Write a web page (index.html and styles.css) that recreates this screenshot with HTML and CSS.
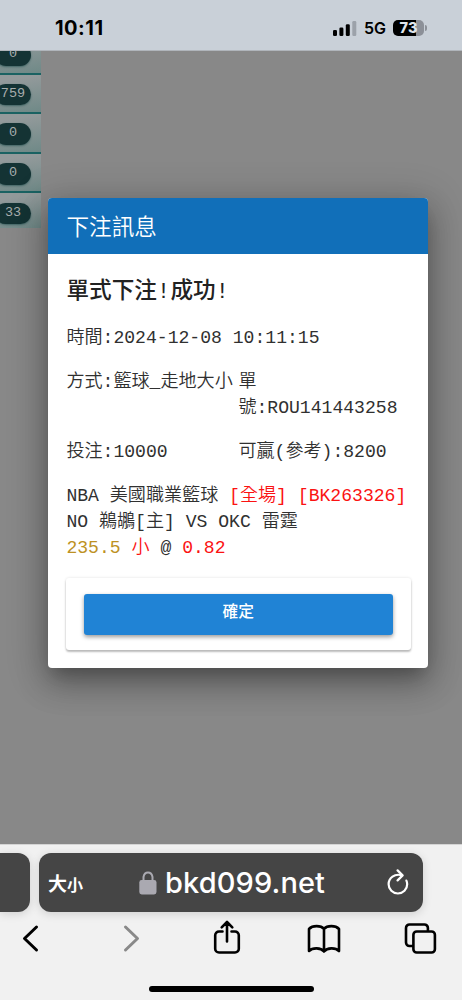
FILE: index.html
```html
<!DOCTYPE html>
<html lang="zh-Hant">
<head>
<meta charset="utf-8">
<meta name="viewport" content="width=device-width">
<title>下注訊息</title>
<link rel="stylesheet" href="styles.css">
</head>
<body>
<div class="phone">
  <header class="status">
    <span class="clock">10:11</span>
    <div class="status-right">
      <svg class="signal" width="24" height="15" viewBox="0 0 24 15"><rect x="0" y="9" width="4" height="6" rx="1.3"/><rect x="6.4" y="6.5" width="4" height="8.5" rx="1.3"/><rect x="12.8" y="3.2" width="4" height="11.8" rx="1.3"/><rect x="19.3" y="0" width="4" height="15" rx="1.3" fill="#9ca2aa"/></svg>
      <span class="network">5G</span>
      <span class="battery">73</span><span class="battery-tip"></span>
    </div>
  </header>

  <main class="page">
    <aside class="counts">
      <div class="count"><span>0</span></div>
      <div class="count"><span>759</span></div>
      <div class="count"><span>0</span></div>
      <div class="count"><span>0</span></div>
      <div class="count"><span>33</span></div>
    </aside>
    <section class="dialog">
      <h1 class="dialog-title">下注訊息</h1>
      <div class="dialog-body">
        <h2 class="result">單式下注!成功!</h2>
        <p>時間:2024-12-08 10:11:15</p>
        <div class="pair"><p>方式:籃球_走地大小</p><p>單<br>號:ROU141443258</p></div>
        <div class="pair"><p>投注:10000</p><p>可贏(參考):8200</p></div>
        <p>NBA 美國職業籃球 <span class="red">[全場]</span> <span class="red">[BK263326]</span><br>NO 鵜鶘[主] VS OKC 雷霆<br><span class="gold">235.5</span> <span class="red">小</span> @ <span class="red">0.82</span></p>
        <div class="actions"><button class="confirm">確定</button></div>
      </div>
    </section>
  </main>

  <footer class="browser">
    <div class="tabs">
      <div class="prev-tab"></div>
      <div class="address">
        <span class="text-size">大<small>小</small></span>
        <span class="host">
          <svg width="18" height="25" viewBox="0 0 18 25"><path d="M4.500 11V7a4.600 5.600 0 0 1 9 0v4" fill="none" stroke="#aaa9b1" stroke-width="2"/><rect x=".3" y="10" width="17.200" height="14.400" rx="2.400" fill="#aaa9b1"/></svg>
          <span>bkd099.net</span>
        </span>
        <svg class="reload" width="24" height="28" viewBox="0 0 24 28" fill="none" stroke="#fff" stroke-width="2.200" stroke-linecap="round" stroke-linejoin="round"><path d="M16 6.300C8.500 4.200 2.600 9 2.600 15.200a9.300 9.300 0 0 0 18.600 0c0-1.400-.3-2.500-.8-3.600"/><path d="M11.600 1.400l5 5-5 5"/></svg>
      </div>
    </div>
    <nav class="tools">
      <svg viewBox="0 0 40 40"><path d="M26.500 9L14.500 20.500l12 11.500" stroke-width="3"/></svg>
      <svg viewBox="0 0 40 40" class="disabled"><path d="M17.500 9l12 11.500-12 11.500" stroke-width="3"/></svg>
      <svg viewBox="0 0 40 40"><path d="M16.500 13.500H13a3.800 3.800 0 0 0-3.800 3.800v13.400a3.800 3.800 0 0 0 3.800 3.800h16a3.800 3.800 0 0 0 3.800-3.800V17.300a3.800 3.800 0 0 0-3.800-3.800h-3.500M21 23.500V4M15.700 9.300L21 4l5.300 5.300"/></svg>
      <svg viewBox="0 0 40 40"><path d="M21 11C17.800 7.200 9.500 7.200 6 11v22c3.500-3.600 11.800-3.600 15 .5 3.200-4.100 11.500-4.100 15-.5V11c-3.500-3.800-11.800-3.800-15 0zM21 11v22"/></svg>
      <svg viewBox="0 0 40 40"><path d="M11.500 28H8.500A3.500 3.500 0 0 1 5 24.500V10A3.500 3.500 0 0 1 8.500 6.500h14.900A3.500 3.500 0 0 1 26.900 10v2.500"/><rect x="12.400" y="13.500" width="21.500" height="21" rx="3.300"/></svg>
    </nav>
    <div class="home-bar"></div>
  </footer>
</div>
</body>
</html>
```
FILE: styles.css
```css
* { box-sizing: border-box; }
body, h1, h2, p { margin: 0; }
body { overflow: hidden; }
.phone {
  width: 462px;
  height: 1000px;
  display: grid;
  grid-template-rows: 51px 793px 156px;
  overflow: hidden;
  font-family: "Liberation Mono", "Noto Sans CJK TC", monospace;
}
.status {
  display: flex;
  justify-content: space-between;
  align-items: center;
  padding: 6px 35px 0 55px;
  background: #c9d0d8;
  border-bottom: 1px solid #b0b5bb;
  font-family: Inter, sans-serif;
  color: #000;
}
.clock { font-size: 20px; font-weight: 700; letter-spacing: .5px; }
.status-right { display: flex; align-items: center; }
.network { margin-left: 7px; width: 29px; font-size: 16px; font-weight: 600; }
.battery {
  width: 31px;
  height: 16px;
  border-radius: 5px;
  background: linear-gradient(90deg, #000 73%, #8c9098 73%);
  color: #dfe4ea;
  font-size: 14.5px;
  font-weight: 800;
  line-height: 16px;
  text-align: center;
}
.battery-tip { width: 2px; height: 6px; margin-left: 1px; border-radius: 0 3px 3px 0; background: #8c9098; }

.page {
  display: grid;
  grid-template-columns: 48px 380px;
  align-items: start;
  overflow: hidden;
  background: #888;
}
.counts { width: 41px; margin-top: -16px; }
.count {
  height: 39.6px;
  padding-top: 9.300px;
  border-bottom: 2px solid #1a6262;
  background: linear-gradient(170deg, #939a9b 15%, #6f8987);
}
.count:last-child { border-bottom: 0; height: 35px; }
.count span {
  display: block;
  width: 36px;
  height: 21.500px;
  margin-left: -5px;
  border-radius: 11px;
  background: #143334;
  box-shadow: 0 1px 2px #1b4a4a99;
  color: #a7adad;
  font-size: 13.500px;
  line-height: 20px;
  text-align: center;
}

.dialog {
  height: 470px;
  margin-top: 147px;
  border-radius: 4px;
  background: #fff;
  box-shadow: 0 11px 15px -7px #0003, 0 16px 30px 2px #00000038, 0 6px 38px 5px #0000002e;
  color: #303030;
}
.dialog-title {
  height: 56px;
  padding: 3px 0 0 18.500px;
  border-radius: 4px 4px 0 0;
  background: #116fb9;
  color: #fff;
  font-size: 22.600px;
  font-weight: 350;
  line-height: 57px;
}
.dialog-body {
  display: flex;
  flex-direction: column;
  gap: 18px;
  padding: 18px 17.500px 18px 18px;
  font-size: 18.080px;
  line-height: 26px;
  white-space: nowrap;
}
.dialog-body p { padding-left: .4px; font-weight: 350; position: relative; top: 1px; }
.result { height: 34px; padding: 2px 0 0 .5px; font-size: 22.600px; font-weight: 500; line-height: 36px; color: #222; }
.pair { display: grid; grid-template-columns: 172px 172px; }
.red { color: #fb1212; }
.gold { color: #bd9123; }
.actions {
  height: 72px;
  padding: 16px 18px;
  border-radius: 3px;
  box-shadow: 0 2px 2px #0000003d, 0 0 3px #0000001f;
}
.confirm {
  display: block;
  width: 100%;
  height: 40.500px;
  padding: 0 0 7px;
  border: 0;
  border-radius: 3px;
  background: #2083d5;
  box-shadow: 0 2px 4px #0006;
  color: #fff;
  font: 500 15.700px "Noto Sans CJK TC", sans-serif;
}

.browser {
  display: grid;
  grid-template-rows: 66px 53px 1fr;
  background: #f1f1f1;
  border-top: 1px solid #d4d4d4;
  overflow: hidden;
}
.tabs { display: flex; gap: 9px; padding-top: 8px; }
.prev-tab, .address { height: 59px; background: #454545; box-shadow: 0 2px 10px #00000024; }
.prev-tab { width: 30px; border-radius: 0 12px 12px 0; }
.address {
  width: 384px;
  display: grid;
  grid-template-columns: 91px 1fr 24px;
  align-items: center;
  padding: 0 13px 0 9px;
  border-radius: 12px;
  color: #fff;
}
.text-size { margin-top: 2px; font: 700 19px/28px "Noto Sans CJK TC", sans-serif; }
.text-size small { font-size: 16px; }
.host { display: flex; align-items: center; gap: 8px; font: 550 29px/36px Inter, sans-serif; letter-spacing: .1px; }
.host svg { margin-top: -1px; flex: none; }
.tools { display: flex; justify-content: space-between; align-items: center; padding: 0 21px 0 10px; }
.tools svg { width: 40px; height: 40px; fill: none; stroke: #000; stroke-width: 2.600; stroke-linecap: round; stroke-linejoin: round; }
.tools .disabled { stroke: #898989; }
.home-bar { width: 165px; height: 6px; margin: 22px 0 0 148.500px; border-radius: 3px; background: #000; }
```
